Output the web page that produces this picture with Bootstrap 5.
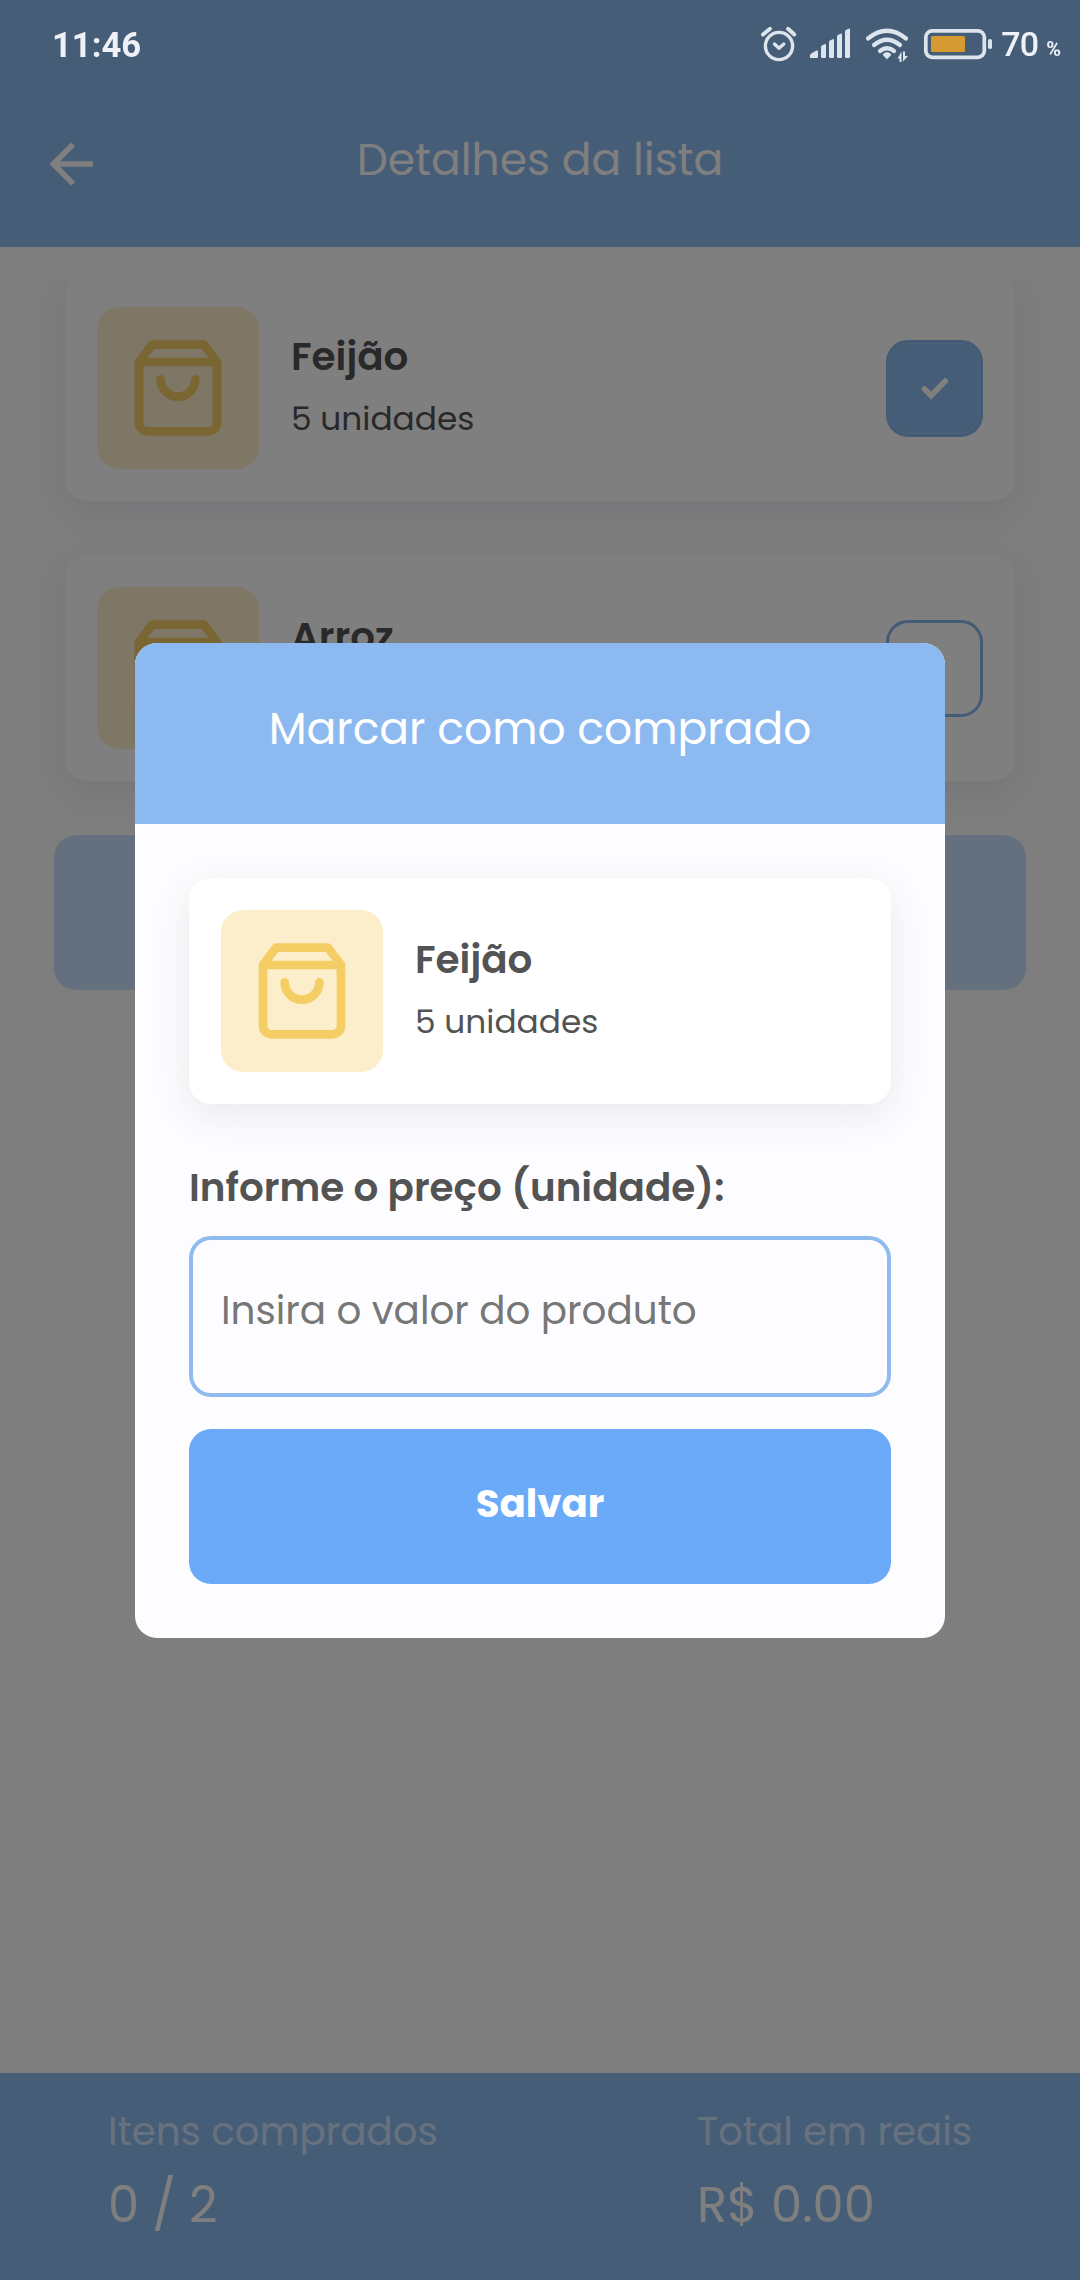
<!DOCTYPE html>
<html lang="pt-BR">
<head>
<meta charset="utf-8">
<meta name="viewport" content="width=device-width, initial-scale=1">
<title>Detalhes da lista</title>
<link href="https://cdn.jsdelivr.net/npm/bootstrap@5.3.0/dist/css/bootstrap.min.css" rel="stylesheet">
<style>
  :root { --sky: #8dbaf0; --azure: #6aaaf8; --ink: #535353; --paper: #fdfdff; }
  body { font-family: Poppins, Inter, sans-serif; background: var(--paper); color: var(--ink); overflow: hidden; }
  .app-screen { width: 1080px; height: 2280px; overflow: hidden; }

  .status-strip { z-index: 1070; height: 90px; padding: 0 19px 0 52px; font-family: Roboto, sans-serif; color: #eef2f8; }
  .status-clock { font-size: 34.6px; font-weight: 700; line-height: 90px; }
  .status-battery { font-size: 34px; font-weight: 500; line-height: 88px; letter-spacing: -.8px; }
  .status-percent { margin-left: 8px; font-size: 20px; font-weight: 700; letter-spacing: 0; }

  .app-header { height: 247px; padding: 72px 38px 0; background: var(--sky); }
  .header-side { width: 66px; height: 66px; margin-top: 59px; color: #fff; }
  .header-title { font-size: 44px; line-height: 60px; color: #fff; }

  .item-list { margin-top: 28px; overflow: hidden; }
  .product-card { height: 226px; padding: 0 32px; gap: 32px; border: 0; border-radius: 22px; background: #fff;
    box-shadow: 0 11px 40px rgba(50, 60, 80, .1); }
  .item-list .product-card { margin: 0 65px 54px; }
  .product-tile { width: 162px; height: 162px; border-radius: 22px; background: #fceecb; color: #f5cd65; }
  .product-name { font-size: 38.9px; font-weight: 600; line-height: 62px; }
  .product-qty { min-height: 62px; font-size: 32.8px; line-height: 62px; }
  .buy-toggle { width: 97px; height: 97px; border: 3px solid #86b6ee; border-radius: 22px; background: #fff; }
  .buy-toggle.is-bought { background: #8dbaf0; color: #fff; box-shadow: inset 0 0 0 1px #9ac4ee; }
  .btn-add { height: 155px; margin: 0 54px; border-radius: 22px; background: #c9e0fb; }

  .app-footer { height: 207px; padding: 22px 108px 0; background: var(--sky); color: #fff; }
  .total-block { width: 275px; white-space: nowrap; }
  .total-label { font-size: 38.8px; line-height: 73px; color: #d0e4fd; }
  .total-value { font-size: 49.5px; line-height: 73px; }

  .price-modal { background: rgba(0, 0, 0, .5); overflow: hidden; }
  .price-modal .modal-dialog { width: 810px; max-width: none; margin: 643px auto 0; }
  .price-modal .modal-content { height: 995px; border: 0; border-radius: 22px; background: var(--paper); color: var(--ink); overflow: hidden; }
  .price-modal .modal-header { height: 181px; padding: 0 0 10px; border: 0; border-radius: 0; background: #8cb9f0; flex: none; }
  .price-modal .modal-title { font-size: 44px; font-weight: 400; line-height: 60px; color: #fff; }
  .price-modal .modal-body { padding: 54px; }
  .price-label { margin: 55px 0 20px; font-size: 38.9px; font-weight: 600; line-height: 57px; }
  .price-input { height: 161px; padding: 0 28px 12px 28px; border: 4px solid #90bbee; border-radius: 22px;
    background: transparent; font-size: 38.9px; }
  .price-input::placeholder { color: #777; opacity: 1; }
  .btn-save { height: 155px; margin-top: 32px; padding: 0 0 5px; border: 0; border-radius: 22px; background: var(--azure);
    color: #fff; font-size: 38.7px; font-weight: 700; }
</style>
</head>
<body>
<svg class="d-none" xmlns="http://www.w3.org/2000/svg">
  <symbol id="bag" viewBox="0 0 24 24">
    <g fill="none" stroke="currentColor" stroke-width="2" stroke-linecap="round" stroke-linejoin="round">
      <path d="M6 2 3 6v14a2 2 0 0 0 2 2h14a2 2 0 0 0 2-2V6l-3-4z"/><path d="M3 6h18"/><path d="M16 10a4 4 0 0 1-8 0"/>
    </g>
  </symbol>
</svg>

<div class="status-strip position-absolute top-0 start-0 w-100 d-flex justify-content-between">
  <span class="status-clock">11:46</span>
  <div class="d-flex">
    <svg width="238" height="88" viewBox="760 0 238 88" fill="none" stroke="#dce4ec">
      <g stroke-width="3.4" stroke-linecap="round" stroke-linejoin="round">
        <circle cx="780" cy="46" r="13.6"/><path d="m775.5 44 4.5 4.2 4.8-4.2"/>
        <path d="m764 34.500 7-5.700m18 0 6.300 5.700" stroke-width="4"/>
      </g>
      <g fill="#dce4ec" stroke="none">
        <path d="M811 58v-2.500q0-1 1-1.700l5.500-3.300q1.500-.5 1.500 1V56.500q0 1.500-1.500 1.500z"/>
        <path d="M822 47q0-1 1-1.500l3-1.500q1 0 1 1v11.500q0 1.500-1.500 1.500h-2q-1.500 0-1.500-1.500z"/>
        <path d="M830 42q0-1 1-1.500l3-1.500q1 0 1 1v16.500q0 1.500-1.500 1.500h-2q-1.500 0-1.500-1.500z"/>
        <path d="M838 36.500q0-1 1-1.500l3-1.500q1 0 1 1v22q0 1.500-1.500 1.500h-2q-1.500 0-1.500-1.500z"/>
        <path d="M846 31.500q0-1 1-1.500l3-1.500q1 0 1 1v27q0 1.500-1.500 1.500h-2q-1.500 0-1.500-1.500z"/>
        <path d="m888 59.300-3.600-3.600a1.800 1.800 0 0 1 .2-2.400q3.400-2 6.800 0a1.800 1.800 0 0 1 .2 2.400z"/>
        <path d="M898.500 58.500l4-7v10.500h-2v-3.500zM904 61.500V51.500h2v4.500h3z"/>
        <rect x="932" y="36" width="34" height="16" rx="1.500" fill="#d69a33"/>
        <rect x="989" y="39" width="4" height="10" rx="1.800"/>
      </g>
      <path d="M869 38.500q19-15.500 38 0M875 45q13-10.500 26 0M881 51q7-5.500 14 0" stroke-width="4.200" stroke-linecap="round"/>
      <rect x="926.800" y="30.800" width="58.500" height="26.500" rx="6.500" stroke-width="3.700"/>
    </svg>
    <span class="status-battery ms-1">70<span class="status-percent">%</span></span>
  </div>
</div>

<div class="app-screen d-flex flex-column">
  <header class="app-header d-flex justify-content-between flex-shrink-0">
    <svg class="header-side" viewBox="0 0 24 24" fill="currentColor"><path d="M20 11v2H8l5.500 5.500-1.420 1.420L4.160 12l7.920-7.920L13.500 5.500 8 11z"/></svg>
    <div class="header-title d-flex align-items-center">Detalhes da lista</div>
    <span class="header-side"></span>
  </header>

  <main class="flex-grow-1">
    <div class="item-list">
      <div class="product-card d-flex align-items-center">
        <div class="product-tile d-flex align-items-center justify-content-center"><svg width="104" height="104"><use href="#bag"/></svg></div>
        <div class="flex-grow-1"><div class="product-name">Feijão</div><div class="product-qty">5 unidades</div></div>
        <div class="buy-toggle is-bought d-flex align-items-center justify-content-center">
          <svg width="29" height="24" viewBox="0 0 29 24" fill="none" stroke="currentColor" stroke-width="5.500" stroke-linecap="round" stroke-linejoin="miter"><path d="m4.300 12.800 6.800 6.700L25.300 5"/></svg>
        </div>
      </div>
      <div class="product-card d-flex align-items-center">
        <div class="product-tile d-flex align-items-center justify-content-center"><svg width="104" height="104"><use href="#bag"/></svg></div>
        <div class="flex-grow-1"><div class="product-name">Arroz</div><div class="product-qty"></div></div>
        <div class="buy-toggle"></div>
      </div>
      <div class="btn-add"></div>
    </div>
  </main>

  <footer class="app-footer d-flex justify-content-between flex-shrink-0">
    <div><div class="total-label">Itens comprados</div><div class="total-value">0 / 2</div></div>
    <div class="total-block"><div class="total-label">Total em reais</div><div class="total-value">R$ 0.00</div></div>
  </footer>
</div>

<div class="modal price-modal d-block" tabindex="-1">
  <div class="modal-dialog">
    <div class="modal-content">
      <div class="modal-header d-flex justify-content-center align-items-center"><h5 class="modal-title">Marcar como comprado</h5></div>
      <div class="modal-body">
        <div class="product-card d-flex align-items-center">
          <div class="product-tile d-flex align-items-center justify-content-center"><svg width="104" height="104"><use href="#bag"/></svg></div>
          <div><div class="product-name">Feijão</div><div class="product-qty">5 unidades</div></div>
        </div>
        <label class="price-label d-block" for="price">Informe o preço (unidade):</label>
        <input class="price-input form-control" id="price" type="text" placeholder="Insira o valor do produto">
        <button class="btn-save btn w-100" type="button">Salvar</button>
      </div>
    </div>
  </div>
</div>
<script src="https://cdn.jsdelivr.net/npm/bootstrap@5.3.0/dist/js/bootstrap.bundle.min.js"></script>
</body>
</html>
